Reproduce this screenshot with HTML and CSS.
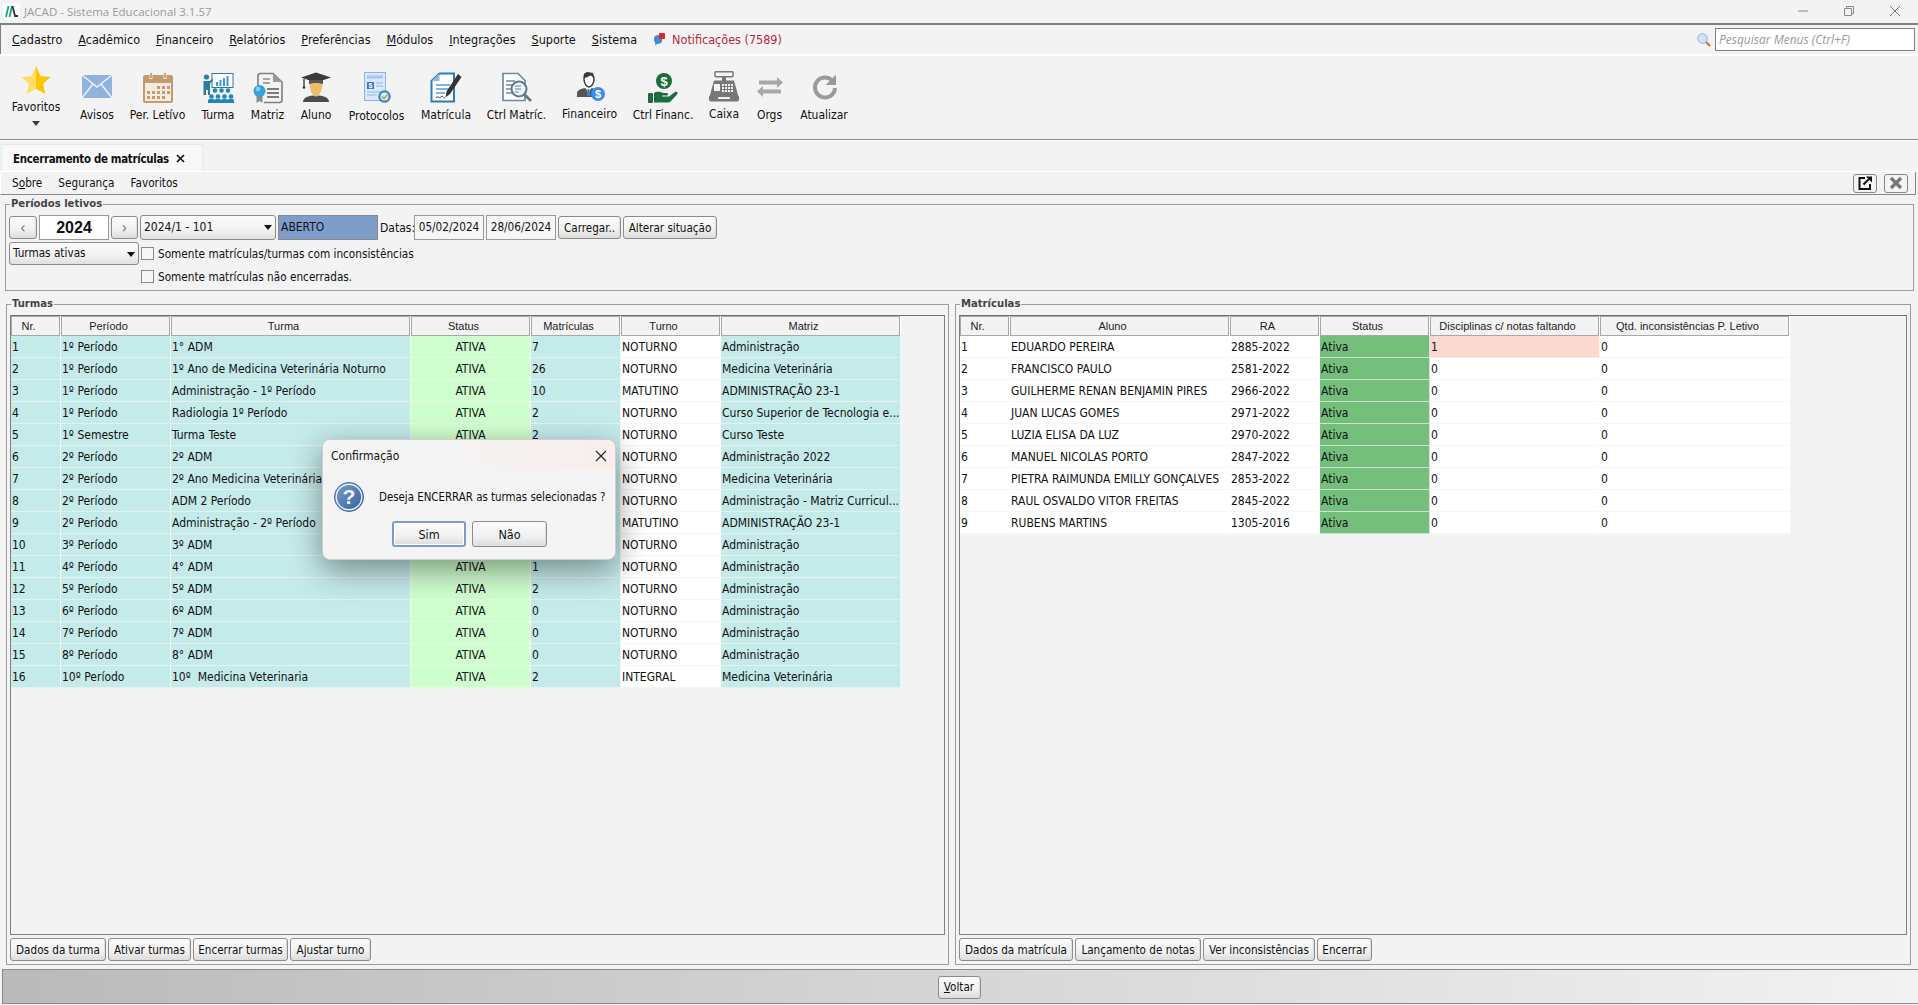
FILE: index.html
```html
<!DOCTYPE html>
<html lang="pt-BR">
<head>
<meta charset="utf-8">
<title>JACAD - Sistema Educacional 3.1.57</title>
<link rel="stylesheet" href="styles.css">
</head>
<body>
<div class="app">
  <header class="titlebar">
    <svg class="logo" width="17" height="17" viewBox="0 0 17 17"><rect width="17" height="17" rx="3" fill="#fff"/><path d="M3 14 5.5 3M6.5 14 9 3" stroke="#17a589" stroke-width="1.8" fill="none"/><path d="M9.5 3 12 13H15" stroke="#333" stroke-width="1.8" fill="none"/></svg>
    <span class="app-title">JACAD - Sistema Educacional 3.1.57</span>
    <div class="winctl">
      <svg width="12" height="12" viewBox="0 0 12 12"><path d="M1 6H11" stroke="#888" fill="none"/></svg>
      <svg width="12" height="12" viewBox="0 0 12 12"><path d="M1.5 3.5H8.5V10.5H1.5ZM3.5 3.5V1.5H10.5V8.5H8.5" stroke="#888" fill="none"/></svg>
      <svg width="12" height="12" viewBox="0 0 12 12"><path d="M1 1 11 11M11 1 1 11" stroke="#777" fill="none"/></svg>
    </div>
  </header>

  <nav class="menubar">
    <a><u>C</u>adastro</a><a><u>A</u>cadêmico</a><a><u>F</u>inanceiro</a><a><u>R</u>elatórios</a><a><u>P</u>referências</a><a><u>M</u>ódulos</a><a><u>I</u>ntegrações</a><a><u>S</u>uporte</a><a><u>S</u>istema</a>
    <span class="notif">
      <svg width="13" height="14" viewBox="0 0 13 14"><path d="M1 7C1 4 3 3 6 3H9V9C9 11 7 12 4 12L2 13.5 2.5 11C1.500 10 1 9 1 7Z" fill="#3f8bd0"/><rect x="6" y="1" width="6" height="6" rx="1" fill="#e2232e"/></svg>
      Notificações (7589)
    </span>
    <div class="menu-search">
      <svg width="14" height="14" viewBox="0 0 14 14"><circle cx="5.500" cy="5.500" r="4.800" fill="#cfe3f8" stroke="#8db4dc"/><path d="M9 9 13 13" stroke="#c87a34" stroke-width="2.200"/></svg>
      <input class="search-input" type="text" placeholder="Pesquisar Menus (Ctrl+F)">
    </div>
  </nav>

  <section class="toolbar">
    <div class="tool tool-fav">
      <span class="ico"><svg width="32" height="32" viewBox="0 0 32 32"><defs><linearGradient id="gs" x1="0" x2="1" y1="0" y2="0"><stop offset=".5" stop-color="#ffdc6a"/><stop offset=".5" stop-color="#ffc400"/></linearGradient></defs><polygon points="16,1 20.500,11 30.500,12 23,19 25.500,29 16,23.800 6.500,29 9,19 1.500,12 11.500,11" fill="url(#gs)"/></svg></span>
      <span class="lbl">Favoritos</span>
      <span class="caret"></span>
    </div>
    <div class="tool">
      <span class="ico"><svg width="32" height="32" viewBox="0 0 32 32"><rect x="1" y="3" width="30" height="23" fill="#8fb3dc"/><path d="M1 3 16 15 31 3M1 26 12 12M31 26 20 12" stroke="#eef4fb" stroke-width="1.400" fill="none"/></svg></span>
      <span class="lbl">Avisos</span>
    </div>
    <div class="tool">
      <span class="ico"><svg width="32" height="32" viewBox="0 0 32 32"><rect x="1" y="3" width="30" height="28" rx="2" fill="#c79a6b"/><rect x="3" y="11" width="26" height="18" fill="#f4ece2"/><path d="M9 0V7M23 0V7" stroke="#f4ece2" stroke-width="3"/><path d="M9 1V6M23 1V6" stroke="#b58757" stroke-width="1.400"/><g fill="#c79a6b"><rect x="15" y="14" width="3" height="3"/><rect x="20" y="14" width="3" height="3"/><rect x="25" y="14" width="3" height="3"/><rect x="5" y="19" width="3" height="3"/><rect x="10" y="19" width="3" height="3"/><rect x="15" y="19" width="3" height="3"/><rect x="20" y="19" width="3" height="3"/><rect x="25" y="19" width="3" height="3"/><rect x="5" y="24" width="3" height="3"/><rect x="10" y="24" width="3" height="3"/><rect x="15" y="24" width="3" height="3"/><rect x="20" y="24" width="3" height="3"/></g></svg></span>
      <span class="lbl">Per. Letívo</span>
    </div>
    <div class="tool">
      <span class="ico"><svg width="32" height="32" viewBox="0 0 32 32"><rect x="10" y="1.500" width="21" height="14" fill="#fff" stroke="#2f7d9e"/><g fill="#3b9ad0"><rect x="14" y="10" width="2" height="4"/><rect x="17.500" y="8" width="2" height="6"/><rect x="21" y="6" width="2" height="8"/><rect x="24.500" y="4" width="2" height="10"/></g><circle cx="4.500" cy="5" r="2.600" fill="#2f7d9e"/><path d="M1.500 9H7.500L11 6.500V8.500L8 11.500V23H6V18H4V23H1.500Z" fill="#2f7d9e"/><g fill="#1f86b8"><circle cx="13" cy="18.500" r="2.300"/><circle cx="19.500" cy="18.500" r="2.300"/><circle cx="26" cy="18.500" r="2.300"/><circle cx="9.500" cy="24.500" r="2.300"/><circle cx="16" cy="24.500" r="2.300"/><circle cx="22.500" cy="24.500" r="2.300"/><circle cx="29" cy="24.500" r="2.300"/><path d="M6 31V28.500C6 27.500 7 27 9.500 27S13 27.500 13 28.500V31ZM12.500 31V28.500C12.500 27.500 13.500 27 16 27S19.500 27.500 19.500 28.500V31ZM19 31V28.500C19 27.500 20 27 22.500 27S26 27.500 26 28.500V31ZM25.500 31V28.500C25.500 27.500 26.500 27 29 27S32 27.500 32 28.500V31Z"/></g></svg></span>
      <span class="lbl">Turma</span>
    </div>
    <div class="tool">
      <span class="ico"><svg width="32" height="32" viewBox="0 0 32 32"><path d="M6 16V4C6 2.500 7 1.500 8.500 1.500H21L30 10V28C30 29.500 29 30.500 27.500 30.500H12" fill="#f3f3f3" stroke="#7d7d7d" stroke-width="1.600"/><path d="M21 1.500V10H30Z" fill="#9a9a9a"/><path d="M11 7H18M11 11H18" stroke="#8a8a8a" stroke-width="1.300"/><path d="M15 17H27M15 21H27M15 25H27" stroke="#555" stroke-width="1.500"/><path d="M4.500 24V31L7.500 29 10.500 31V24Z" fill="#8a8a8a"/><circle cx="7.500" cy="19" r="6" fill="#35a0da"/><circle cx="6" cy="17" r="2.400" fill="#80cdf0"/></svg></span>
      <span class="lbl">Matriz</span>
    </div>
    <div class="tool">
      <span class="ico"><svg width="32" height="32" viewBox="0 0 32 32"><path d="M3 30C3 25 9 23.500 16 23.500S29 25 29 30Z" fill="#4c4c4c"/><path d="M9.500 11H22.500C22.500 17 20 24 16 24.500S9.500 17 9.500 11Z" fill="#efbd6a"/><path d="M16 .5 31 5.500 16 10.500 1 5.500Z" fill="#3a3a3a"/><path d="M9 8H23V12C19 10.500 13 10.500 9 12Z" fill="#555"/><path d="M4 7V15" stroke="#333" stroke-width="1.300"/><circle cx="4" cy="15.500" r="1.300" fill="#333"/></svg></span>
      <span class="lbl">Aluno</span>
    </div>
    <div class="tool tool-prot">
      <span class="ico"><svg width="32" height="32" viewBox="0 0 32 32"><rect x="3.500" y="0.500" width="21" height="28" fill="#dbe8fb" stroke="#8fb2e6"/><rect x="6" y="3.500" width="16" height="3" fill="#a9c6f0"/><rect x="6" y="10" width="7" height="7" fill="#3a73c4"/><text class="ico-money" x="9.500" y="16">$</text><path d="M15 11H22M15 14H22M6 20H20M6 23H16" stroke="#a9c6f0" stroke-width="1.300"/><circle cx="23.500" cy="24.500" r="6.300" fill="#3a8cc8"/><circle cx="23.500" cy="24.500" r="4" fill="#dcecf8"/><path d="M21 24.500 23 26.500 26.500 22.500" stroke="#c9a227" stroke-width="1.600" fill="none"/></svg></span>
      <span class="lbl">Protocolos</span>
    </div>
    <div class="tool">
      <span class="ico"><svg width="32" height="32" viewBox="0 0 32 32"><path d="M1.500 9 9.500 1.500H24V29.500H1.500Z" fill="#fff" stroke="#2b7bbd" stroke-width="2"/><path d="M9.500 1.500V9H1.500Z" fill="#8db8dc"/><path d="M6 13H20M6 17H20M6 21H15" stroke="#5a9bd0" stroke-width="1.600"/><path d="M6 26C8 23 9 27 11 25S13 26 15 26" stroke="#333" fill="none"/><path d="M28 2 31.500 5 20 22 15.500 25.500 16.500 19.500Z" fill="#333"/></svg></span>
      <span class="lbl">Matrícula</span>
    </div>
    <div class="tool">
      <span class="ico"><svg width="32" height="32" viewBox="0 0 32 32"><path d="M2 1.500H17L24 8.500V28.500H2Z" fill="#fff" stroke="#6b8a9e" stroke-width="1.700"/><path d="M5 9H14M5 13H11M5 17H11M5 21H11" stroke="#6b8a9e" stroke-width="1.300"/><circle cx="18" cy="17" r="7.500" fill="#eef4f8" stroke="#5d7a8d" stroke-width="2"/><path d="M14 14H20M14 17H20M14 20H18" stroke="#6b8a9e"/><path d="M23.500 22.500 30 29" stroke="#5d7a8d" stroke-width="2.600"/></svg></span>
      <span class="lbl">Ctrl Matríc.</span>
    </div>
    <div class="tool tool-up">
      <span class="ico"><svg width="32" height="32" viewBox="0 0 32 32"><path d="M11 3C15 1 20 3 20 8C20 13 17 16 15 16S10 13 10 8C10 6 10 4 11 3Z" fill="#fff" stroke="#3a3a3a" stroke-width="1.500"/><path d="M10 7C12 7 15 5 17 4.500L20 7 19 2 13 1 10 3Z" fill="#3a3a3a"/><path d="M3 26V22C3 19 8 17.500 11.500 17L14.500 22 17.500 17C19 17.200 21 18 22 19V26Z" fill="#555"/><path d="M13.500 18H15.500L16 25H13Z" fill="#3b7fd8"/><circle cx="24" cy="23" r="7" fill="#3d8bef"/><text class="ico-money2" x="24" y="27">$</text></svg></span>
      <span class="lbl">Financeiro</span>
    </div>
    <div class="tool">
      <span class="ico"><svg width="32" height="32" viewBox="0 0 32 32"><circle cx="17" cy="9" r="8" fill="#1e6b3c"/><text class="ico-money3" x="17" y="14">$</text><rect x="1" y="21" width="5" height="10" rx="1" fill="#1e6b3c"/><path d="M7 21C11 19 13 20 16 21H20C21.500 21 21.500 23.500 20 23.500H15V24.500H22L28 20C30 19 31.500 21 30 22.500L24 29C23 30 22 30.500 20 30.500H7Z" fill="#1e6b3c"/></svg></span>
      <span class="lbl">Ctrl Financ.</span>
    </div>
    <div class="tool tool-up">
      <span class="ico"><svg width="32" height="32" viewBox="0 0 32 32"><rect x="7" y="0.800" width="18" height="5" rx="1" fill="#f3f3f3" stroke="#777" stroke-width="1.500"/><rect x="14" y="6" width="4" height="4" fill="#777"/><path d="M6 9.500H26L30 24H2Z" fill="#777"/><rect x="1" y="24" width="30" height="6.500" rx="2" fill="#777"/><rect x="6" y="13" width="6" height="7" fill="#f3f3f3"/><g fill="#f3f3f3"><rect x="14" y="13" width="2" height="2"/><rect x="17" y="13" width="2" height="2"/><rect x="20" y="13" width="2" height="2"/><rect x="23" y="13" width="2" height="2"/><rect x="14" y="16" width="2" height="2"/><rect x="17" y="16" width="2" height="2"/><rect x="20" y="16" width="2" height="2"/><rect x="23" y="16" width="2" height="2"/><rect x="14" y="19" width="2" height="2"/><rect x="17" y="19" width="2" height="2"/><rect x="20" y="19" width="2" height="2"/><rect x="23" y="19" width="2" height="2"/></g><rect x="10" y="26" width="12" height="2" fill="#f3f3f3"/></svg></span>
      <span class="lbl">Caixa</span>
    </div>
    <div class="tool">
      <span class="ico"><svg width="32" height="32" viewBox="0 0 32 32"><path d="M5 8.500H23V5L29 10.500 23 16V12.500H5Z" fill="#a8a8a8"/><path d="M27 17.500H9V14L3 19.500 9 25V21.500H27Z" fill="#a8a8a8"/></svg></span>
      <span class="lbl">Orgs</span>
    </div>
    <div class="tool">
      <span class="ico"><svg width="32" height="32" viewBox="0 0 32 32"><path d="M25 9.500A10 10 0 1 0 27 16" fill="none" stroke="#9a9a9a" stroke-width="4"/><path d="M28 2.500V13H17.500Z" fill="#9a9a9a"/></svg></span>
      <span class="lbl">Atualizar</span>
    </div>
  </section>

  <div class="tabstrip">
    <div class="tab"><span>Encerramento de matrículas</span><svg class="tab-x" width="9" height="9" viewBox="0 0 9 9"><path d="M1 1 8 8M8 1 1 8" stroke="#111" stroke-width="1.700"/></svg></div>
  </div>

  <nav class="submenu">
    <a>S<u>o</u>bre</a><a>Segurança</a><a>Favoritos</a>
    <div class="submenu-tools">
      <span class="mini-btn"><svg width="16" height="16" viewBox="0 0 16 16"><path d="M8 3H2.500V14H13V9" fill="none" stroke="#111" stroke-width="2"/><path d="M6.500 9.500 12 4" stroke="#111" stroke-width="2"/><path d="M9 1.500H15V7.500Z" fill="#111"/></svg></span>
      <span class="mini-btn"><svg width="14" height="14" viewBox="0 0 14 14"><path d="M2 2 12 12M12 2 2 12" stroke="#777" stroke-width="3.200"/></svg></span>
    </div>
  </nav>

  <main class="content">
    <fieldset class="group periods">
      <legend>Períodos letivos</legend>
      <div class="period-row">
        <button class="btn arrow arrow-prev">‹</button>
        <div class="year">2024</div>
        <button class="btn arrow">›</button>
        <div class="combo combo-period">2024/1 - 101</div>
        <div class="status-box">ABERTO</div>
        <span class="datas">Datas:</span>
        <div class="date">05/02/2024</div>
        <div class="date">28/06/2024</div>
        <button class="btn btn-load">Carregar..</button>
        <button class="btn btn-change">Alterar situação</button>
      </div>
      <div class="filter-grid">
        <div class="combo combo-filter">Turmas ativas</div>
        <label class="check"><span class="box"></span>Somente matrículas/turmas com inconsistências</label>
        <label class="check check-second"><span class="box"></span>Somente matrículas não encerradas.</label>
      </div>
    </fieldset>

    <div class="panels">
      <fieldset class="group panel">
        <legend>Turmas</legend>
        <div class="grid-box">
          <table class="data turmas">
            <colgroup><col class="w50"><col class="w110"><col class="w240"><col class="w120"><col class="w90"><col class="w100"><col class="w180"></colgroup>
            <thead><tr><th>Nr.</th><th>Período</th><th>Turma</th><th>Status</th><th>Matrículas</th><th>Turno</th><th>Matriz</th></tr></thead>
            <tbody>
              <tr><td>1</td><td>1º Período</td><td>1° ADM</td><td>ATIVA</td><td>7</td><td>NOTURNO</td><td>Administração</td></tr>
              <tr><td>2</td><td>1º Período</td><td>1º Ano de Medicina Veterinária Noturno</td><td>ATIVA</td><td>26</td><td>NOTURNO</td><td>Medicina Veterinária</td></tr>
              <tr><td>3</td><td>1º Período</td><td>Administração - 1º Período</td><td>ATIVA</td><td>10</td><td>MATUTINO</td><td>ADMINISTRAÇÃO 23-1</td></tr>
              <tr><td>4</td><td>1º Período</td><td>Radiologia 1º Período</td><td>ATIVA</td><td>2</td><td>NOTURNO</td><td>Curso Superior de Tecnologia e...</td></tr>
              <tr><td>5</td><td>1º Semestre</td><td>Turma Teste</td><td>ATIVA</td><td>2</td><td>NOTURNO</td><td>Curso Teste</td></tr>
              <tr><td>6</td><td>2º Período</td><td>2º ADM</td><td></td><td></td><td>NOTURNO</td><td>Administração 2022</td></tr>
              <tr><td>7</td><td>2º Período</td><td>2º Ano Medicina Veterinária</td><td></td><td></td><td>NOTURNO</td><td>Medicina Veterinária</td></tr>
              <tr><td>8</td><td>2º Período</td><td>ADM 2 Período</td><td></td><td></td><td>NOTURNO</td><td>Administração - Matriz Curricul...</td></tr>
              <tr><td>9</td><td>2º Período</td><td>Administração - 2º Período</td><td></td><td></td><td>MATUTINO</td><td>ADMINISTRAÇÃO 23-1</td></tr>
              <tr><td>10</td><td>3º Período</td><td>3º ADM</td><td></td><td></td><td>NOTURNO</td><td>Administração</td></tr>
              <tr><td>11</td><td>4º Período</td><td>4° ADM</td><td>ATIVA</td><td>1</td><td>NOTURNO</td><td>Administração</td></tr>
              <tr><td>12</td><td>5º Período</td><td>5º ADM</td><td>ATIVA</td><td>2</td><td>NOTURNO</td><td>Administração</td></tr>
              <tr><td>13</td><td>6º Período</td><td>6º ADM</td><td>ATIVA</td><td>0</td><td>NOTURNO</td><td>Administração</td></tr>
              <tr><td>14</td><td>7º Período</td><td>7º ADM</td><td>ATIVA</td><td>0</td><td>NOTURNO</td><td>Administração</td></tr>
              <tr><td>15</td><td>8º Período</td><td>8° ADM</td><td>ATIVA</td><td>0</td><td>NOTURNO</td><td>Administração</td></tr>
              <tr><td>16</td><td>10º Período</td><td>10º  Medicina Veterinaria</td><td>ATIVA</td><td>2</td><td>INTEGRAL</td><td>Medicina Veterinária</td></tr>
            </tbody>
          </table>
        </div>
        <div class="actions">
          <button class="btn b96">Dados da turma</button>
          <button class="btn b83">Ativar turmas</button>
          <button class="btn b95">Encerrar turmas</button>
          <button class="btn b81">Ajustar turno</button>
        </div>
      </fieldset>

      <fieldset class="group panel">
        <legend>Matrículas</legend>
        <div class="grid-box">
          <table class="data matriculas">
            <colgroup><col class="w50"><col class="w220"><col class="w90"><col class="w110"><col class="w170"><col class="w190"></colgroup>
            <thead><tr><th>Nr.</th><th>Aluno</th><th>RA</th><th>Status</th><th>Disciplinas c/ notas faltando</th><th>Qtd. inconsistências P. Letivo</th></tr></thead>
            <tbody>
              <tr><td>1</td><td>EDUARDO PEREIRA</td><td>2885-2022</td><td>Ativa</td><td class="warn">1</td><td>0</td></tr>
              <tr><td>2</td><td>FRANCISCO PAULO</td><td>2581-2022</td><td>Ativa</td><td>0</td><td>0</td></tr>
              <tr><td>3</td><td>GUILHERME RENAN BENJAMIN PIRES</td><td>2966-2022</td><td>Ativa</td><td>0</td><td>0</td></tr>
              <tr><td>4</td><td>JUAN LUCAS GOMES</td><td>2971-2022</td><td>Ativa</td><td>0</td><td>0</td></tr>
              <tr><td>5</td><td>LUZIA ELISA DA LUZ</td><td>2970-2022</td><td>Ativa</td><td>0</td><td>0</td></tr>
              <tr><td>6</td><td>MANUEL NICOLAS PORTO</td><td>2847-2022</td><td>Ativa</td><td>0</td><td>0</td></tr>
              <tr><td>7</td><td>PIETRA RAIMUNDA EMILLY GONÇALVES</td><td>2853-2022</td><td>Ativa</td><td>0</td><td>0</td></tr>
              <tr><td>8</td><td>RAUL OSVALDO VITOR FREITAS</td><td>2845-2022</td><td>Ativa</td><td>0</td><td>0</td></tr>
              <tr><td>9</td><td>RUBENS MARTINS</td><td>1305-2016</td><td>Ativa</td><td>0</td><td>0</td></tr>
            </tbody>
          </table>
        </div>
        <div class="actions">
          <button class="btn b114">Dados da matrícula</button>
          <button class="btn b126">Lançamento de notas</button>
          <button class="btn b112">Ver inconsistências</button>
          <button class="btn b55">Encerrar</button>
        </div>
      </fieldset>
    </div>
  </main>

  <footer class="footer">
    <button class="btn b43"><u>V</u>oltar</button>
  </footer>
</div>

<div class="dialog" role="dialog">
  <div class="dialog-head">
    <span>Confirmação</span>
    <svg width="14" height="14" viewBox="0 0 14 14"><path d="M2 2 12 12M12 2 2 12" stroke="#222" stroke-width="1.100"/></svg>
  </div>
  <div class="dialog-body">
    <svg width="32" height="32" viewBox="0 0 32 32"><defs><linearGradient id="gq" x1="0" y1="0" x2="1" y2="1"><stop offset="0" stop-color="#7f9fcc"/><stop offset="1" stop-color="#2f5f9f"/></linearGradient></defs><circle cx="16" cy="16" r="14.500" fill="url(#gq)" stroke="#3c6aa8"/><circle cx="16" cy="16" r="12.800" fill="none" stroke="#e8eff8" stroke-width="1.400"/><text class="ico-q" x="16" y="23">?</text></svg>
    <span class="dialog-text">Deseja ENCERRAR as turmas selecionadas ?</span>
  </div>
  <div class="dialog-actions">
    <button class="btn dbtn dbtn-default">Sim</button>
    <button class="btn dbtn">Não</button>
  </div>
</div>
</body>
</html>
```
FILE: styles.css
```css
* { box-sizing: border-box; }
html, body { margin: 0; padding: 0; height: 100%; }
body {
  background: #f3f3f3;
  color: #111;
  font-family: "DejaVu Sans", sans-serif;
  font-stretch: condensed;
  font-size: 12px;
  overflow: hidden;
  position: relative;
}
.app { display: flex; flex-direction: column; width: 1918px; height: 1005px; }

/* title */
.titlebar {
  height: 25px; display: flex; align-items: center; padding: 0 0 1px 3px;
  border-bottom: 2px solid #808080; flex: none;
}
.app-title { margin-left: 4px; font-family: "Open Sans", sans-serif; font-stretch: normal; font-size: 11.5px; color: #9a9a9a; }
.logo { flex: none; }
.winctl { margin-left: auto; display: flex; gap: 34px; padding-right: 17px; }

/* menu */
.menubar {
  height: 29px; flex: none; display: flex; align-items: center; gap: 16px;
  padding-left: 11px; font-size: 12.5px; border-left: 1px solid #808080; margin-bottom: 2px;
  box-shadow: 0 2px 0 #fff;
}
.menubar a { white-space: nowrap; }
.notif { display: flex; align-items: center; gap: 6px; color: #b32a3c; margin-top: -1px; }
.menu-search { margin-left: auto; display: flex; align-items: center; gap: 4px; padding-right: 3px; }
.search-input {
  width: 200px; height: 23px; border: 1px solid #808080; background: #fff; padding: 0 3px;
  font: italic 12px "Open Sans", sans-serif; border-radius: 0;
}
.search-input::placeholder { color: #999; opacity: 1; }

/* toolbar */
.toolbar {
  height: 84px; flex: none; display: grid; padding-left: 6px; align-items: start;
  grid-template-columns: 60px 62px 59px 62px 37px 60px 61px 78px 63px 83px 64px 58px 33px 76px;
  border-bottom: 1px solid #8a8a8a; box-shadow: 0 1px 0 #fff;
  font-size: 12px;
}
.tool { display: flex; flex-direction: column; align-items: center; padding-top: 16px; white-space: nowrap; }
.tool-fav { padding-top: 9px; }
.tool-up { padding-top: 15px; }
.ico { height: 32px; display: block; }
.ico svg { display: block; }
.lbl { height: 16px; line-height: 16px; margin-top: 3px; }
.tool-fav .lbl { margin-top: 2px; }
.tool-prot .lbl { margin-top: 4px; }
.caret { width: 0; height: 0; margin-top: 6px; border: 4px solid transparent; border-top: 5px solid #2f3f50; border-bottom: 0; }
.ico-money { font: bold 7px "Liberation Sans", sans-serif; fill: #fff; text-anchor: middle; }
.ico-money2 { font: bold 11px "Liberation Sans", sans-serif; fill: #fff; text-anchor: middle; }
.ico-money3 { font: bold 13px "Liberation Sans", sans-serif; fill: #fff; text-anchor: middle; }
.ico-q { font: bold 21px "Liberation Sans", sans-serif; fill: #eef3fa; text-anchor: middle; }

/* tabs */
.tabstrip { height: 31px; flex: none; padding: 3px 0 0 1px; border-bottom: 1px solid #fff; margin-top: 1px; }
.tab {
  width: 202px; height: 27px; background: #f8f8f8; border: 1px solid #e8e8e8; border-bottom: 0;
  padding: 1px 0 0 11px; display: flex; align-items: center; gap: 7px;
  font-size: 11.4px; letter-spacing: -.3px; font-weight: 600; white-space: nowrap; color: #111;
}
.tab-x { flex: none; }

/* submenu */
.submenu {
  height: 23px; flex: none; display: flex; align-items: center; gap: 16px; font-size: 11.7px;
  padding-left: 11px; border-left: 1px solid #fff; border-bottom: 1px solid #888; border-right: 1px solid #888; margin: 0 2px 0 0;
}
.submenu-tools { margin-left: auto; display: flex; gap: 7px; padding-right: 7px; }
.mini-btn {
  width: 24px; height: 19px; border: 1px solid #888; border-radius: 3px; display: flex;
  align-items: center; justify-content: center; background: #f4f4f4;
}

/* groups */
.content { flex: none; padding: 1px 0 0 5px; }
.group { margin: 0; padding: 3px; border: 1px solid #9c9c9c; min-width: 0; }
.group legend {
  padding: 0 1px; margin-left: 1px; height: 16px; line-height: 16px;
  font-weight: 600; color: #444; font-size: 11.2px;
}
.periods { width: 1909px; height: 95px; }
.period-row { display: flex; gap: 2px; align-items: center; height: 25px; }
.btn {
  font-family: inherit; font-stretch: condensed; font-size: 11.6px; color: #111; height: 23px; padding: 0;
  border: 1px solid #8c8c8c; border-radius: 3px; white-space: nowrap;
  background: linear-gradient(#fbfbfb 0%, #f1f1f1 60%, #dcdcdc 100%);
  box-shadow: inset -1px -1px 1px #ddd;
}
.arrow { color: #777; font-size: 16px; line-height: 16px; width: 27px; }
.arrow-prev { width: 28px; }
.year {
  width: 70px; height: 25px; background: #fff; border: 1px solid #999; text-align: center;
  font: bold 16px/23px "Liberation Sans", sans-serif;
}
.combo {
  position: relative; border: 1px solid #8c8c8c; border-radius: 3px; padding-left: 3px;
  background: linear-gradient(#fbfbfb, #f1f1f1 60%, #e0e0e0);
  white-space: nowrap; height: 25px; line-height: 23px;
}
.combo::after {
  content: ""; position: absolute; right: 3px; top: 9px; border: 4px solid transparent;
  border-top: 5px solid #111; border-bottom: 0;
}
.combo-period { width: 136px; }
.combo-filter { width: 130px; height: 23px; line-height: 21px; }
.status-box { width: 100px; height: 25px; line-height: 23px; background: #7d9dcb; border: 1px solid #8a8a8a; padding-left: 2px; }
.datas { width: 32px; }
.date { width: 70px; height: 25px; line-height: 23px; border: 1px solid #999; text-align: center; background: #f6f6f6; font-size: 11.7px; }
.btn-load { width: 63px; }
.btn-change { width: 94px; }
.filter-grid { display: grid; grid-template-columns: 130px 1fr; column-gap: 2px; margin-top: 2px; row-gap: 0; font-size: 11.7px; }
.check { display: flex; align-items: center; gap: 4px; height: 23px; white-space: nowrap; }
.check-second { grid-column: 2; height: 25px; margin-top: -1px; }
.box { width: 13px; height: 13px; border: 1px solid #8a8a8a; background: #f7f7f7; flex: none; }

.panels { display: grid; grid-template-columns: 943px 956px; gap: 6px; margin: 5px 0 0 1px; height: 669px; }
.panel { display: flex; flex-direction: column; height: 669px; }
.grid-box { height: 620px; border: 1px solid #808080; border-top: 1px solid #707070; flex: none; overflow: hidden; }
.actions { display: flex; gap: 2px; margin-top: 3px; }

/* tables */
.data { border-collapse: separate; border-spacing: 0; table-layout: fixed; }
.turmas { width: 890px; }
.matriculas { width: 830px; }
.w50 { width: 50px; } .w90 { width: 90px; } .w100 { width: 100px; } .w110 { width: 110px; }
.w120 { width: 120px; } .w170 { width: 170px; } .w180 { width: 180px; } .w190 { width: 190px; }
.w220 { width: 220px; } .w240 { width: 240px; }
.data th {
  height: 20px; padding: 0 14px 0 0; font: normal 11px "Liberation Sans", sans-serif; color: #222;
  background: #f3f3f3; border-right: 1px solid #fff; box-shadow: inset 0 0 0 1px #a8a8a8;
}
.data td {
  height: 22px; padding: 0 0 0 1px; white-space: pre; overflow: hidden;
  border-right: 1px solid rgba(255,255,255,.65); border-bottom: 1px solid rgba(243,243,243,.7);
  background: #fff;
}
.turmas td { background: #c5eaea; }
.turmas td:nth-child(4) { background: #cfffcf; text-align: center; padding: 0; }
.turmas td:nth-child(6) { background: #fff; }
.matriculas td:nth-child(4) { background: #74bf7c; }
.matriculas td.warn { background: #fbd9d0; }

.b96 { width: 96px; } .b83 { width: 83px; } .b95 { width: 95px; } .b81 { width: 81px; }
.b114 { width: 114px; } .b126 { width: 126px; } .b112 { width: 112px; } .b55 { width: 55px; }
.b43 { width: 43px; }

/* footer */
.footer {
  flex: none; height: 35px; margin: 4px 0 2px 2px; width: 1916px; display: flex; align-items: center; justify-content: center;
  border: 1px solid #8a8a8a; border-right: 0; padding: 1px 3px 0 0;
  background: linear-gradient(90deg, #bababa, #f2f2f2);
}

/* dialog */
.dialog {
  position: absolute; left: 322px; top: 439px; width: 294px; height: 121px;
  background: #f4f4f4; border-radius: 8px; border: 1px solid #cfcfcf;
  box-shadow: 0 10px 32px rgba(0,0,0,.42);
}
.dialog-head {
  height: 30px; display: flex; align-items: center; justify-content: space-between; padding: 1px 7px 0 8px;
  background: linear-gradient(90deg, #f4f4f4 40%, #f9eeec); border-radius: 8px 8px 0 0;
}
.dialog-body { display: flex; align-items: center; height: 52px; padding: 1px 0 0 10px; }
.dialog-text { margin-left: 14px; white-space: nowrap; font-size: 11.4px; }
.dialog-actions { display: flex; gap: 6px; padding-left: 69px; margin-top: -1px; }
.dbtn { width: 75px; height: 26px; font-size: 12.5px; }
.dbtn-default { width: 74px; border: 2px solid #7f9cc8; box-shadow: inset 0 0 0 1px #fff; }
```
